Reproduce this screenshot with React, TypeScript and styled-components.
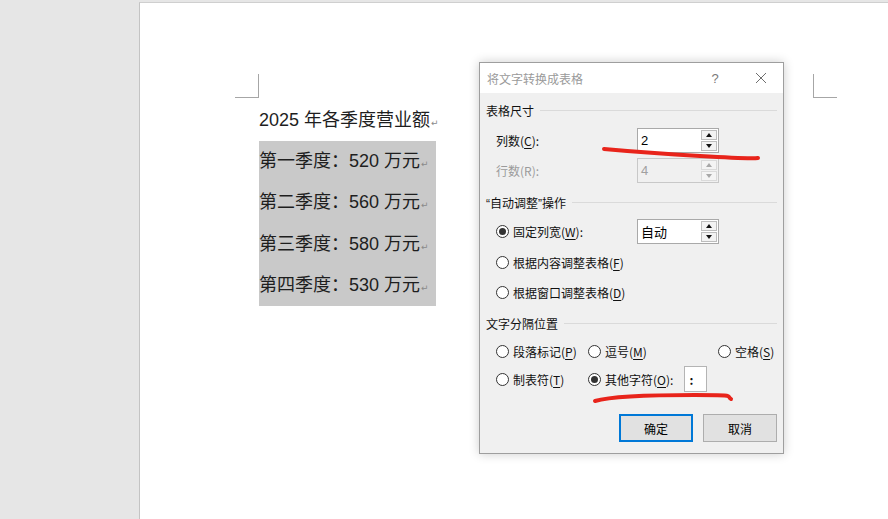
import React from "react";
import styled, { createGlobalStyle } from "styled-components";

const Global = createGlobalStyle`
  html, body { margin: 0; padding: 0; }
  body { background: #e6e6e6; overflow: hidden; width: 888px; height: 519px; }
`;

const Workspace = styled.div`
  display: flex;
  width: 888px;
  height: 519px;
  padding: 2px 0 0 139px;
  box-sizing: border-box;
  background: #e6e6e6;
  position: relative;
  overflow: hidden;
`;

const Page = styled.div`
  flex: 1;
  background: #fff;
  border-left: 1px solid #c4c4c4;
  border-top: 1px solid #cfcfcf;
  padding: 71px 0 0 95px;
  box-sizing: border-box;
  display: flex;
  flex-direction: column;
`;

const CornerRow = styled.div`
  display: flex;
  justify-content: space-between;
  width: 602px;
`;

const Corner = styled.div<{ $side: "left" | "right" }>`
  width: 23px;
  height: 23px;
  border-bottom: 1px solid #a6a6a6;
  ${(p) => (p.$side === "left" ? "border-right: 1px solid #a6a6a6;" : "border-left: 1px solid #a6a6a6;")}
`;

const TextBlock = styled.div`
  margin: 1.5px 0 0 24px;
  font-family: "Liberation Sans", "Noto Sans CJK SC", sans-serif;
  font-size: 18px;
  color: #1e1e1e;
`;

const Para = styled.div`
  height: 41.4px;
  line-height: 41.4px;
  white-space: nowrap;
`;

const Shaded = styled.div`
  width: 177px;
  background: #c9c9c9;
`;

const Mark = styled.span`
  font-family: "DejaVu Sans", sans-serif;
  font-size: 9px;
  color: #8a8a8a;
  margin-left: 1px;
`;

const Dialog = styled.div`
  position: absolute;
  left: 479px;
  top: 62px;
  width: 305px;
  height: 392px;
  box-sizing: border-box;
  border: 1px solid #9e9e9e;
  background: #f0f0f0;
  box-shadow: 0 0 10px rgba(0, 0, 0, 0.2);
  display: flex;
  flex-direction: column;
  font-family: "Noto Sans CJK SC", sans-serif;
  font-size: 12px;
  color: #111;
`;

const TitleBar = styled.div`
  height: 30px;
  background: #fff;
  display: flex;
  align-items: center;
  padding: 0 7px 0 7px;
  color: #9a9a9a;
`;

const TitleText = styled.div`
  flex: 1;
  font-size: 12px;
`;

const HelpBtn = styled.div`
  width: 20px;
  text-align: center;
  font-family: "Liberation Sans", sans-serif;
  font-size: 13px;
  color: #7a7a7a;
  margin-right: 21px;
`;

const CloseBtn = styled.div`
  width: 30px;
  display: flex;
  justify-content: center;
  align-items: center;
`;

const Body = styled.div`
  padding: 7px 6px 0 6px;
  display: flex;
  flex-direction: column;
`;

const GroupHead = styled.div<{ $mt?: number }>`
  height: 20px;
  display: flex;
  align-items: center;
  gap: 6px;
  margin-top: ${(p) => p.$mt ?? 0}px;
`;

const HeadLine = styled.div`
  flex: 1;
  height: 1px;
  background: #dadada;
`;

const Quote = styled.span`
  font-family: "Liberation Sans", sans-serif;
`;

const Row = styled.div<{ $h?: number; $mt?: number }>`
  display: flex;
  align-items: center;
  height: ${(p) => p.$h ?? 30}px;
  margin-top: ${(p) => p.$mt ?? 0}px;
  padding-left: 10px;
`;

const Label = styled.div<{ $disabled?: boolean }>`
  width: 141px;
  color: ${(p) => (p.$disabled ? "#9b9b9b" : "#111")};
`;

const U = styled.span`
  text-decoration: underline;
  text-underline-offset: 2px;
`;

const Spin = styled.div<{ $disabled?: boolean }>`
  width: 82px;
  height: 25px;
  box-sizing: border-box;
  border: 1px solid ${(p) => (p.$disabled ? "#c8c8c8" : "#a9a9a9")};
  background: ${(p) => (p.$disabled ? "#f0f0f0" : "#fff")};
  display: flex;
`;

const SpinValue = styled.div<{ $disabled?: boolean }>`
  flex: 1;
  padding-left: 3px;
  display: flex;
  align-items: center;
  font-family: "Liberation Sans", "Noto Sans CJK SC", sans-serif;
  font-size: 13px;
  color: ${(p) => (p.$disabled ? "#a0a0a0" : "#000")};
`;

const SpinButtons = styled.div`
  width: 17px;
  display: flex;
  flex-direction: column;
  gap: 1px;
  padding: 1px 1px 1px 0;
  box-sizing: border-box;
`;

const SpinBtn = styled.div<{ $disabled?: boolean }>`
  flex: 1;
  box-sizing: border-box;
  border: 1px solid ${(p) => (p.$disabled ? "#dadada" : "#bdbdbd")};
  background: ${(p) => (p.$disabled ? "#f4f4f4" : "#f3f3f3")};
  display: flex;
  align-items: center;
  justify-content: center;
`;

const Arrow = styled.div<{ $up?: boolean; $disabled?: boolean }>`
  width: 0;
  height: 0;
  border-left: 3.5px solid transparent;
  border-right: 3.5px solid transparent;
  ${(p) =>
    p.$up
      ? `border-bottom: 4px solid ${p.$disabled ? "#a8a8a8" : "#111"};`
      : `border-top: 4px solid ${p.$disabled ? "#a8a8a8" : "#111"};`}
`;

const RadioItem = styled.div`
  display: flex;
  align-items: center;
  gap: 4px;
  white-space: nowrap;
`;

const RadioCircle = styled.div<{ $on?: boolean }>`
  width: 13px;
  height: 13px;
  box-sizing: border-box;
  border-radius: 50%;
  border: 1px solid #333;
  background: #fff;
  display: flex;
  align-items: center;
  justify-content: center;
  &::after {
    content: "";
    display: ${(p) => (p.$on ? "block" : "none")};
    width: 7px;
    height: 7px;
    border-radius: 50%;
    background: #333;
  }
`;

const SepGrid = styled.div`
  display: grid;
  grid-template-columns: 92px 130px 1fr;
  grid-auto-rows: 28px;
  align-items: center;
  padding-left: 10px;
  margin-top: 4px;
`;

const OtherCell = styled.div`
  grid-column: 2 / 4;
  display: flex;
  align-items: center;
`;

const CharBox = styled.div`
  width: 23px;
  height: 26px;
  box-sizing: border-box;
  margin-left: 11px;
  border: 1px solid #b4b4b4;
  background: #fff;
  display: flex;
  align-items: center;
  padding-left: 4px;
  font-size: 12px;
  font-weight: bold;
`;

const Buttons = styled.div`
  display: flex;
  justify-content: flex-end;
  gap: 10px;
  margin-top: 21px;
`;

const Button = styled.div<{ $primary?: boolean }>`
  width: 74px;
  height: 28px;
  box-sizing: border-box;
  background: #e1e1e1;
  border: ${(p) => (p.$primary ? "2px solid #0078d7" : "1px solid #adadad")};
  display: flex;
  align-items: center;
  justify-content: center;
  font-size: 12px;
  color: #000;
`;

const Overlay = styled.svg`
  position: absolute;
  left: 0;
  top: 0;
  pointer-events: none;
`;

function SpinBox({ value, disabled }: { value: string; disabled?: boolean }) {
  return (
    <Spin $disabled={disabled}>
      <SpinValue $disabled={disabled}>{value}</SpinValue>
      <SpinButtons>
        <SpinBtn $disabled={disabled}>
          <Arrow $up $disabled={disabled} />
        </SpinBtn>
        <SpinBtn $disabled={disabled}>
          <Arrow $disabled={disabled} />
        </SpinBtn>
      </SpinButtons>
    </Spin>
  );
}

function Radio({ on, children }: { on?: boolean; children: React.ReactNode }) {
  return (
    <RadioItem>
      <RadioCircle $on={on} />
      <span>{children}</span>
    </RadioItem>
  );
}

const quarters = [
  "第一季度：520 万元",
  "第二季度：560 万元",
  "第三季度：580 万元",
  "第四季度：530 万元",
];

export default function App() {
  return (
    <>
      <Global />
      <Workspace>
        <Page>
          <CornerRow>
            <Corner $side="left" />
            <Corner $side="right" />
          </CornerRow>
          <TextBlock>
            <Para>
              2025 年各季度营业额<Mark>↵</Mark>
            </Para>
            <Shaded>
              {quarters.map((t) => (
                <Para key={t}>
                  {t}
                  <Mark>↵</Mark>
                </Para>
              ))}
            </Shaded>
          </TextBlock>
        </Page>

        <Dialog>
          <TitleBar>
            <TitleText>将文字转换成表格</TitleText>
            <HelpBtn>?</HelpBtn>
            <CloseBtn>
              <svg width="12" height="12" viewBox="0 0 12 12">
                <path d="M1 1 L11 11 M11 1 L1 11" stroke="#6e6e6e" strokeWidth="1" fill="none" />
              </svg>
            </CloseBtn>
          </TitleBar>
          <Body>
            <GroupHead>
              <span>表格尺寸</span>
              <HeadLine />
            </GroupHead>
            <Row $mt={5}>
              <Label>
                列数(<U>C</U>):
              </Label>
              <SpinBox value="2" />
            </Row>
            <Row>
              <Label $disabled>行数(R):</Label>
              <SpinBox value="4" disabled />
            </Row>
            <GroupHead $mt={7}>
              <span>
                <Quote>“</Quote>自动调整<Quote>”</Quote>操作
              </span>
              <HeadLine />
            </GroupHead>
            <Row $mt={4}>
              <Label>
                <Radio on>
                  固定列宽(<U>W</U>):
                </Radio>
              </Label>
              <SpinBox value="自动" />
            </Row>
            <Row $mt={1}>
              <Radio>
                根据内容调整表格(<U>F</U>)
              </Radio>
            </Row>
            <Row>
              <Radio>
                根据窗口调整表格(<U>D</U>)
              </Radio>
            </Row>
            <GroupHead $mt={6}>
              <span>文字分隔位置</span>
              <HeadLine />
            </GroupHead>
            <SepGrid>
              <Radio>
                段落标记(<U>P</U>)
              </Radio>
              <Radio>
                逗号(<U>M</U>)
              </Radio>
              <Radio>
                空格(<U>S</U>)
              </Radio>
              <Radio>
                制表符(<U>T</U>)
              </Radio>
              <OtherCell>
                <Radio on>
                  其他字符(<U>O</U>):
                </Radio>
                <CharBox>:</CharBox>
              </OtherCell>
            </SepGrid>
            <Buttons>
              <Button $primary>确定</Button>
              <Button>取消</Button>
            </Buttons>
          </Body>
        </Dialog>

        <Overlay width="888" height="519" viewBox="0 0 888 519">
          <path
            d="M604 149 Q 650 153 700 156 T 758 158"
            stroke="#e8241b"
            strokeWidth="4"
            strokeLinecap="round"
            fill="none"
          />
          <path
            d="M595 401 C 612 396 650 395 695 395 S 725 396 731 399"
            stroke="#e8241b"
            strokeWidth="4"
            strokeLinecap="round"
            fill="none"
          />
        </Overlay>
      </Workspace>
    </>
  );
}
